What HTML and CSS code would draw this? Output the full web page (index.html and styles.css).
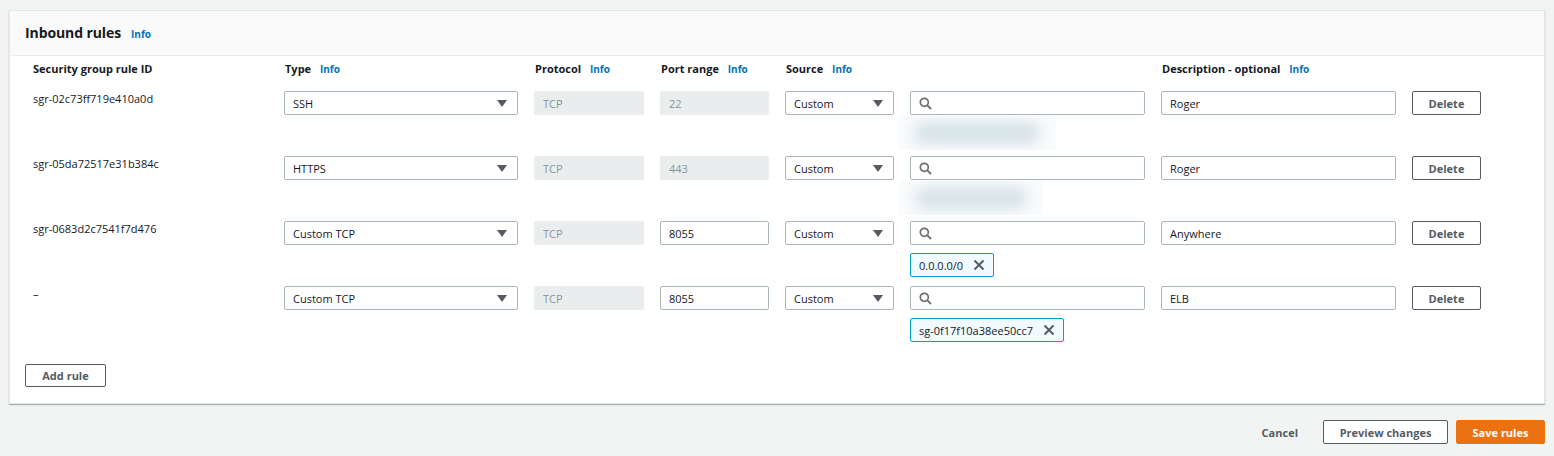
FILE: index.html
```html
<!DOCTYPE html>
<html>
<head>
<meta charset="utf-8">
<link rel="stylesheet" href="styles.css">
</head>
<body>
<div class="card">
  <div class="card-header">
    <h2>Inbound rules</h2><a class="info">Info</a>
  </div>
  <div class="card-body">
    <div class="grid head">
      <div class="lbl id">Security group rule ID</div>
      <div class="lbl">Type <a class="info">Info</a></div>
      <div class="lbl">Protocol <a class="info">Info</a></div>
      <div class="lbl">Port range <a class="info">Info</a></div>
      <div class="lbl">Source <a class="info">Info</a></div>
      <div class="lbl"></div>
      <div class="lbl">Description - optional <a class="info">Info</a></div>
      <div></div>
    </div>

    <div class="grid row">
      <div class="rid">sgr-02c73ff719e410a0d</div>
      <div class="select">SSH<span class="caret"></span></div>
      <div class="input disabled">TCP</div>
      <div class="input disabled">22</div>
      <div class="select">Custom<span class="caret"></span></div>
      <div class="src">
        <div class="input search"><svg width="13" height="13" viewBox="0 0 13 13"><circle cx="5.3" cy="5.3" r="4" fill="none" stroke="#687078" stroke-width="1.7"/><line x1="8.3" y1="8.3" x2="12" y2="12" stroke="#687078" stroke-width="1.9"/></svg></div>
        <div class="blur w1"><span></span></div>
      </div>
      <div class="input">Roger</div>
      <div class="btn">Delete</div>
    </div>

    <div class="grid row">
      <div class="rid">sgr-05da72517e31b384c</div>
      <div class="select">HTTPS<span class="caret"></span></div>
      <div class="input disabled">TCP</div>
      <div class="input disabled">443</div>
      <div class="select">Custom<span class="caret"></span></div>
      <div class="src">
        <div class="input search"><svg width="13" height="13" viewBox="0 0 13 13"><circle cx="5.3" cy="5.3" r="4" fill="none" stroke="#687078" stroke-width="1.7"/><line x1="8.3" y1="8.3" x2="12" y2="12" stroke="#687078" stroke-width="1.9"/></svg></div>
        <div class="blur w2"><span></span></div>
      </div>
      <div class="input">Roger</div>
      <div class="btn">Delete</div>
    </div>

    <div class="grid row">
      <div class="rid">sgr-0683d2c7541f7d476</div>
      <div class="select">Custom TCP<span class="caret"></span></div>
      <div class="input disabled">TCP</div>
      <div class="input">8055</div>
      <div class="select">Custom<span class="caret"></span></div>
      <div class="src">
        <div class="input search"><svg width="13" height="13" viewBox="0 0 13 13"><circle cx="5.3" cy="5.3" r="4" fill="none" stroke="#687078" stroke-width="1.7"/><line x1="8.3" y1="8.3" x2="12" y2="12" stroke="#687078" stroke-width="1.9"/></svg></div>
        <div class="token">0.0.0.0/0<svg width="12" height="12" viewBox="0 0 12 12"><path d="M1.5 1.5L10.5 10.5M10.5 1.5L1.5 10.5" stroke="#545b64" stroke-width="1.9"/></svg></div>
      </div>
      <div class="input">Anywhere</div>
      <div class="btn">Delete</div>
    </div>

    <div class="grid row last">
      <div class="rid">–</div>
      <div class="select">Custom TCP<span class="caret"></span></div>
      <div class="input disabled">TCP</div>
      <div class="input">8055</div>
      <div class="select">Custom<span class="caret"></span></div>
      <div class="src">
        <div class="input search"><svg width="13" height="13" viewBox="0 0 13 13"><circle cx="5.3" cy="5.3" r="4" fill="none" stroke="#687078" stroke-width="1.7"/><line x1="8.3" y1="8.3" x2="12" y2="12" stroke="#687078" stroke-width="1.9"/></svg></div>
        <div class="token">sg-0f17f10a38ee50cc7<svg width="12" height="12" viewBox="0 0 12 12"><path d="M1.5 1.5L10.5 10.5M10.5 1.5L1.5 10.5" stroke="#545b64" stroke-width="1.9"/></svg></div>
      </div>
      <div class="input">ELB</div>
      <div class="btn">Delete</div>
    </div>

    <div class="add"><div class="btn add-btn">Add rule</div></div>
  </div>
</div>

<div class="footer">
  <div class="link-btn">Cancel</div>
  <div class="btn">Preview changes</div>
  <div class="btn primary">Save rules</div>
</div>
</body>
</html>
```

FILE: styles.css
```css
* { box-sizing: border-box; }
html, body { margin: 0; }
body {
  background: #f2f3f3;
  font-family: "Open Sans", "Noto Sans", sans-serif;
  font-size: 11px;
  color: #16191f;
  padding: 10px 9px 0 9px;
}
.card {
  background: #fff;
  border: 1px solid #e3e7e8;
  box-shadow: 0 1px 1px 0 rgba(0,28,36,.3);
}
.card-header {
  display: flex;
  align-items: center;
  background: #fafafa;
  border-bottom: 1px solid #eaeded;
  padding: 0 15px;
  height: 45px;
}
.card-header h2 {
  margin: 0;
  font-size: 14px;
  font-weight: 700;
  line-height: 20px;
  letter-spacing: -0.1px;
}
.card-header .info { margin-left: 10px; margin-top: 2px; }
.info {
  color: #0073bb;
  font-weight: 700;
  font-size: 10px;
  margin-left: 6px;
}
.card-body {
  padding: 5px 15px 16px 15px;
}
.grid {
  display: grid;
  grid-template-columns: 243px 234px 110px 109px 109px 235px 235px 69px;
  column-gap: 16px;
  align-items: start;
}
.head { height: 30px; }
.lbl {
  font-weight: 700;
  line-height: 16px;
  padding-left: 1px;
}
.lbl.id { padding-left: 8px; }
.row { height: 65px; }
.row.last { height: 66px; }
.rid {
  padding-left: 8px;
  line-height: 16px;
  color: #16191f;
}
.input, .select {
  height: 24px;
  border: 1px solid #aab7b8;
  border-radius: 2px;
  padding: 0 8px;
  display: flex;
  align-items: center;
  background: #fff;
  white-space: nowrap;
}
.select { justify-content: space-between; }
.input.disabled {
  background: #eaeded;
  border-color: #eaeded;
  color: #879596;
}
.caret {
  width: 0; height: 0;
  border-left: 5px solid transparent;
  border-right: 5px solid transparent;
  border-top: 7px solid #545b64;
  margin-right: 2px;
}
.search svg { margin-left: 0; }
.blur {
  height: 34px;
  margin-top: 1px;
  margin-left: -12px;
  background: #f9fbfc;
  position: relative;
  overflow: hidden;
}
.blur.w1 { width: 158px; }
.blur.w2 { width: 144px; margin-left: -11px; }
.blur span {
  position: absolute;
  left: 16px; right: 16px;
  top: 6px; height: 22px;
  background: #d5e2e7;
  border-radius: 11px;
  filter: blur(7px);
}
.token {
  margin-top: 8px;
  display: inline-flex;
  align-items: center;
  height: 24px;
  border: 1px solid #00a1c9;
  background: #f1faff;
  border-radius: 2px;
  padding: 0 8px 0 8px;
  gap: 10px;
  color: #16191f;
}
.btn {
  height: 24px;
  border: 1px solid #545b64;
  border-radius: 2px;
  display: flex;
  align-items: center;
  justify-content: center;
  font-weight: 700;
  color: #545b64;
  background: #fff;
  padding: 0 16px;
  white-space: nowrap;
}
.add { display: flex; margin-top: 12px; }
.add-btn { width: 81px; height: 23px; }
.footer {
  display: flex;
  justify-content: flex-end;
  gap: 8px;
  margin-top: 16px;
}
.link-btn {
  height: 24px;
  display: flex;
  align-items: center;
  padding: 0 17px;
  font-weight: 700;
  color: #545b64;
}
.footer .btn { width: 125px; }
.footer .btn.primary {
  width: 89px;
  background: #ec7211;
  border-color: #ec7211;
  color: #fff;
}
```
